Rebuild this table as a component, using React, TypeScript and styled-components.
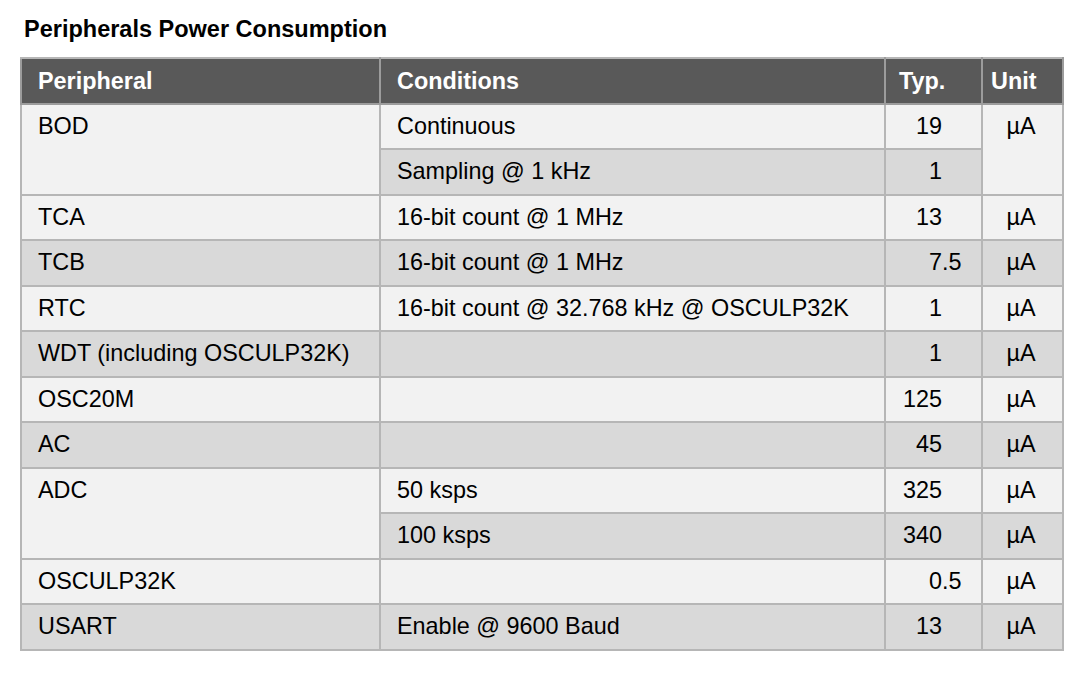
import React from "react";
import styled, { createGlobalStyle } from "styled-components";

const Global = createGlobalStyle`
  html, body { margin: 0; padding: 0; background: #ffffff; }
  body { font-family: "Liberation Sans", Arial, sans-serif; color: #000; }
`;

const Page = styled.div`
  padding: 16px 0 0 20px;
`;

const Title = styled.h1`
  margin: 0 0 14px 4px;
  font-size: 23.5px;
  font-weight: 700;
  line-height: 27px;
  color: #000;
`;

const Table = styled.table`
  border-collapse: collapse;
  table-layout: fixed;
  width: 1042px;
  border: 2px solid #b6b6b6;
  font-size: 23.4px;
  line-height: 26px;
`;

const Row = styled.tr`
  height: 45.5px;
`;

const Th = styled.th<{ $pl?: number }>`
  background: #595959;
  color: #ffffff;
  font-weight: 700;
  text-align: left;
  vertical-align: middle;
  padding: 0 0 0 ${(p) => p.$pl ?? 16}px;
  border: 2px solid #9c9c9c;
  border-top-color: #b6b6b6;
  white-space: nowrap;
`;

const Td = styled.td<{ $dark?: boolean; $align?: "left" | "center" }>`
  background: ${(p) => (p.$dark ? "#d9d9d9" : "#f2f2f2")};
  text-align: ${(p) => p.$align ?? "left"};
  vertical-align: top;
  padding: 8px ${(p) => (p.$align === "center" ? 3 : 0)}px 0
    ${(p) => (p.$align === "center" ? 0 : 16)}px;
  border: 2px solid #b6b6b6;
  white-space: nowrap;
`;

const TypCell = styled(Td)`
  padding-left: 8px;
`;

const IntPart = styled.span`
  display: inline-block;
  width: 48px;
  text-align: right;
`;

const FracPart = styled.span``;

type Sub = { cond: string; typ: string; dark: boolean };
type Entry = { name: string; dark: boolean; subs: Sub[] };

const data: Entry[] = [
  {
    name: "BOD",
    dark: false,
    subs: [
      { cond: "Continuous", typ: "19", dark: false },
      { cond: "Sampling @ 1 kHz", typ: "1", dark: true },
    ],
  },
  { name: "TCA", dark: false, subs: [{ cond: "16-bit count @ 1 MHz", typ: "13", dark: false }] },
  { name: "TCB", dark: true, subs: [{ cond: "16-bit count @ 1 MHz", typ: "7.5", dark: true }] },
  {
    name: "RTC",
    dark: false,
    subs: [{ cond: "16-bit count @ 32.768 kHz @ OSCULP32K", typ: "1", dark: false }],
  },
  { name: "WDT (including OSCULP32K)", dark: true, subs: [{ cond: "", typ: "1", dark: true }] },
  { name: "OSC20M", dark: false, subs: [{ cond: "", typ: "125", dark: false }] },
  { name: "AC", dark: true, subs: [{ cond: "", typ: "45", dark: true }] },
  {
    name: "ADC",
    dark: false,
    subs: [
      { cond: "50 ksps", typ: "325", dark: false },
      { cond: "100 ksps", typ: "340", dark: true },
    ],
  },
  { name: "OSCULP32K", dark: false, subs: [{ cond: "", typ: "0.5", dark: false }] },
  { name: "USART", dark: true, subs: [{ cond: "Enable @ 9600 Baud", typ: "13", dark: true }] },
];

const Typ: React.FC<{ value: string; dark: boolean }> = ({ value, dark }) => {
  const [int, frac] = value.split(".");
  return (
    <TypCell $dark={dark}>
      <IntPart>{int}</IntPart>
      {frac !== undefined && <FracPart>.{frac}</FracPart>}
    </TypCell>
  );
};

export default function App() {
  return (
    <>
      <Global />
      <Page>
        <Title>Peripherals Power Consumption</Title>
        <Table>
          <colgroup>
            <col style={{ width: 359 }} />
            <col style={{ width: 505 }} />
            <col style={{ width: 97 }} />
            <col style={{ width: 81 }} />
          </colgroup>
          <thead>
            <Row>
              <Th>Peripheral</Th>
              <Th>Conditions</Th>
              <Th $pl={13}>Typ.</Th>
              <Th $pl={8}>Unit</Th>
            </Row>
          </thead>
          <tbody>
            {data.map((e) =>
              e.subs.map((s, i) => (
                <Row key={e.name + i}>
                  {i === 0 && (
                    <Td $dark={e.dark} rowSpan={e.subs.length}>
                      {e.name}
                    </Td>
                  )}
                  <Td $dark={s.dark}>{s.cond}</Td>
                  <Typ value={s.typ} dark={s.dark} />
                  {(i === 0 || e.name !== "BOD") && (
                    <Td
                      $dark={e.name === "BOD" ? false : s.dark}
                      $align="center"
                      rowSpan={e.name === "BOD" ? 2 : 1}
                    >
                      µA
                    </Td>
                  )}
                </Row>
              ))
            )}
          </tbody>
        </Table>
      </Page>
    </>
  );
}
